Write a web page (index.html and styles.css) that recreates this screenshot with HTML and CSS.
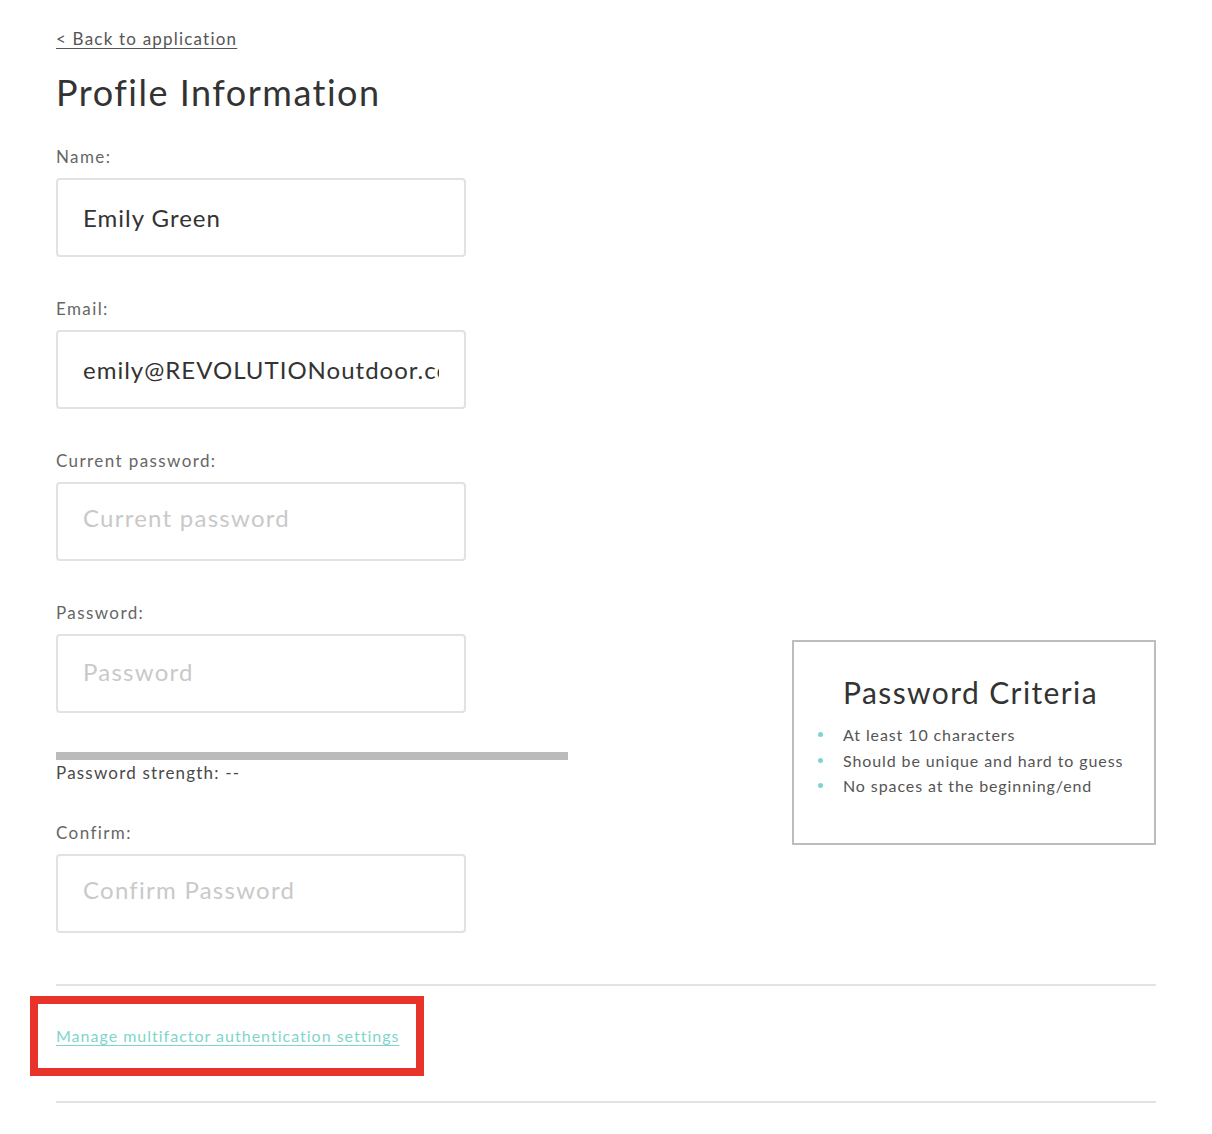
FILE: index.html
```html
<!DOCTYPE html>
<html lang="en">
<head>
<meta charset="utf-8">
<title>Profile Information</title>
<link rel="stylesheet" href="styles.css">
</head>
<body>
<div class="page">
  <a class="back" href="#">&lt; Back to application</a>
  <h1 class="title">Profile Information</h1>
  <div class="row">
    <form class="form">
      <div class="field">
        <label class="label">Name:</label>
        <input class="input" type="text" value="Emily Green">
      </div>
      <div class="field">
        <label class="label">Email:</label>
        <input class="input" type="text" value="emily@REVOLUTIONoutdoor.com">
      </div>
      <div class="field">
        <label class="label">Current password:</label>
        <input class="input input-empty" type="password" placeholder="Current password">
      </div>
      <div class="field">
        <label class="label">Password:</label>
        <input class="input input-empty input-mid" type="password" placeholder="Password">
      </div>
      <div class="strength">
        <div class="strength-bar"></div>
        <div class="strength-text">Password strength: --</div>
      </div>
      <div class="field field-confirm">
        <label class="label">Confirm:</label>
        <input class="input input-empty" type="password" placeholder="Confirm Password">
      </div>
    </form>
    <aside class="criteria">
      <h2 class="criteria-title">Password Criteria</h2>
      <ul class="criteria-list">
        <li>At least 10 characters</li>
        <li>Should be unique and hard to guess</li>
        <li>No spaces at the beginning/end</li>
      </ul>
    </aside>
  </div>
  <hr class="rule rule-top">
  <div class="mfa">
    <a class="mfa-link" href="#">Manage multifactor authentication settings</a>
  </div>
  <hr class="rule rule-bottom">
</div>
</body>
</html>
```
FILE: styles.css
```css
html, body {
  margin: 0;
  padding: 0;
  background: #ffffff;
}

body {
  font-family: Lato, "Open Sans", "Liberation Sans", sans-serif;
  color: #333333;
}

.page {
  width: 1100px;
  margin-left: 56px;
  padding-top: 29px;
  padding-bottom: 30px;
}

.back {
  display: block;
  width: max-content;
  font-size: 17px;
  line-height: 20px;
  letter-spacing: 1.2px;
  color: #555555;
  text-decoration: underline;
  text-underline-offset: 3px;
}

.title {
  margin: 21px 0 0;
  font-size: 36px;
  line-height: 44px;
  font-weight: 400;
  letter-spacing: 1.5px;
  color: #333333;
}

.row {
  display: flex;
  align-items: flex-start;
  margin-top: 33px;
}

.form {
  width: 512px;
  margin: 0;
}

.field {
  display: flex;
  flex-direction: column;
  margin-bottom: 42px;
}

.label {
  font-size: 17px;
  line-height: 20px;
  letter-spacing: 1.4px;
  color: #666666;
}

.input {
  box-sizing: border-box;
  width: 410px;
  height: 79px;
  margin-top: 11px;
  padding: 0 25px;
  border: 2px solid #e2e2e2;
  border-radius: 4px;
  font-family: Lato, "Open Sans", "Liberation Sans", sans-serif;
  font-size: 24px;
  letter-spacing: 1px;
  color: #333333;
  background: #ffffff;
  outline: none;
}

.input-empty {
  padding-bottom: 8px;
}

.input-mid {
  padding-bottom: 4px;
}

.input::placeholder {
  color: #c9c9c9;
  letter-spacing: 1.25px;
}

.strength {
  margin-top: -3px;
  margin-bottom: 40px;
}

.strength-bar {
  width: 512px;
  height: 8px;
  background: #bbbbbb;
}

.strength-text {
  margin-top: 3px;
  font-size: 17px;
  line-height: 20px;
  letter-spacing: 1.2px;
  color: #4a4a4a;
}

.field-confirm {
  margin-bottom: 0;
}

.criteria {
  box-sizing: border-box;
  width: 364px;
  height: 205px;
  margin-left: 224px;
  margin-top: 493px;
  border: 2px solid #bdbdbd;
  padding: 32px 0 0 24px;
}

.criteria-title {
  margin: 0 0 0 25px;
  font-size: 30px;
  line-height: 36px;
  font-weight: 400;
  letter-spacing: 1.4px;
  color: #333333;
}

.criteria-list {
  list-style: none;
  margin: 12px 0 0;
  padding: 0;
}

.criteria-list li {
  position: relative;
  padding-left: 25px;
  font-size: 16px;
  line-height: 25.5px;
  letter-spacing: 0.9px;
  color: #555555;
}

.criteria-list li::before {
  content: "";
  position: absolute;
  left: 0;
  top: 10px;
  width: 5px;
  height: 5px;
  border-radius: 50%;
  background: #7fd5cd;
}

.rule {
  border: 0;
  height: 2px;
  background: #e3e3e3;
  margin: 0;
}

.rule-top {
  margin-top: 51px;
}

.mfa {
  position: relative;
  margin-top: 40px;
  margin-bottom: 55px;
  line-height: 20px;
}

.mfa::before {
  content: "";
  position: absolute;
  left: -26px;
  top: -30px;
  width: 394px;
  height: 80px;
  box-sizing: border-box;
  border: 8px solid #e8332a;
}

.mfa-link {
  font-size: 16px;
  letter-spacing: 1px;
  color: #7fd5cd;
  text-decoration: underline;
  text-underline-offset: 3px;
}
```
